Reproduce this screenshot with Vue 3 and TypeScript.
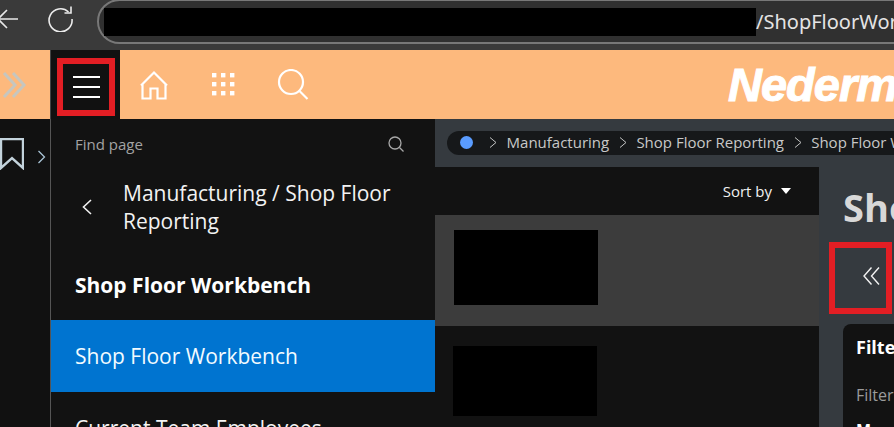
<template>
  <div class="page">
    <div class="browser-bar">
      <svg class="back" width="20" height="24" viewBox="0 0 20 24" fill="none" stroke="#e8e8e8" stroke-width="1.6">
        <path d="M18 12H-2M7 3l-9 9 9 9" />
      </svg>
      <svg class="reload" width="26" height="26" viewBox="0 0 26 26" fill="none" stroke="#ececec" stroke-width="1.6">
        <path d="M20.5 6A11.5 11.5 0 1 0 24 13" />
        <path d="M23 .5V7h-6.5" />
      </svg>
      <div class="address">
        <span class="redacted"></span>
        <span class="url">/ShopFloorWorkbench</span>
      </div>
    </div>

    <header class="topbar">
      <button class="expand">
        <svg width="26" height="28" viewBox="0 0 26 28" fill="none" stroke="#c6c6bf" stroke-width="3">
          <path d="M2 2l11 12L2 26M11 2l11 12-11 12" />
        </svg>
      </button>
      <div class="menu-cell">
        <div class="menu-mark">
          <span></span>
          <span></span>
          <span></span>
        </div>
      </div>
      <div class="top-icons">
        <svg width="30" height="30" viewBox="0 0 30 30" fill="none" stroke="#fff" stroke-width="2.2">
          <path d="M2 15.5L15 2.5l13 13M3.5 14v14.5h8V18.5h7v10h8V14" />
        </svg>
        <svg class="grid-icon" width="24" height="24" viewBox="0 0 24 24" fill="#fff">
          <rect v-for="dot in dots" :key="dot.id" :x="dot.x" :y="dot.y" width="4.4" height="4.4" />
        </svg>
        <svg class="search-icon" width="32" height="32" viewBox="0 0 32 32" fill="none" stroke="#fff" stroke-width="2.2">
          <circle cx="14" cy="13" r="12" />
          <path d="M22.5 22l8 8" />
        </svg>
      </div>
      <div class="logo">Nedermans</div>
    </header>

    <div class="workspace">
      <aside class="rail">
        <svg class="bookmark" width="24" height="32" viewBox="0 0 24 32" fill="none" stroke="#c3d3dc" stroke-width="2.4">
          <path d="M1 1h22v29L12 20 1 30z" />
        </svg>
        <svg class="rail-arrow" width="9" height="14" viewBox="0 0 9 14" fill="none" stroke="#a9c4d6" stroke-width="1.3">
          <path d="M1.5 1l6 6-6 6" />
        </svg>
      </aside>

      <nav class="nav">
        <div class="find">
          <span>Find page</span>
          <svg width="16" height="16" viewBox="0 0 16 16" fill="none" stroke="#a8a8a8" stroke-width="1.3">
            <circle cx="7" cy="7" r="6" />
            <path d="M11.5 11.5l4 4" />
          </svg>
        </div>
        <div class="nav-parent">
          <svg width="10" height="16" viewBox="0 0 10 16" fill="none" stroke="#f0f0f0" stroke-width="1.6">
            <path d="M9 1L1.5 8l7.5 7" />
          </svg>
          <span>Manufacturing / Shop Floor Reporting</span>
        </div>
        <div class="nav-title">Shop Floor Workbench</div>
        <div class="nav-item active">Shop Floor Workbench</div>
        <div class="nav-item">Current Team Employees</div>
      </nav>

      <main class="content">
        <div class="crumbs">
          <span class="crumb-dot"></span>
          <template v-for="crumb in crumbs" :key="crumb">
            <svg width="8" height="11" viewBox="0 0 8 11" fill="none" stroke="#c4c4c4" stroke-width="1">
              <path d="M1 .5l6 5-6 5" />
            </svg>
            <span>{{ crumb }}</span>
          </template>
        </div>

        <div class="panels">
          <section class="list">
            <div class="sort">
              <span>Sort by</span>
              <i class="caret"></i>
            </div>
            <div class="row selected"><span class="thumb"></span></div>
            <div class="row plain"><span class="thumb"></span></div>
          </section>

          <section class="detail">
            <h1>Shop Floor Workbench</h1>
            <div class="collapse-mark">
              <svg width="17" height="18" viewBox="0 0 17 18" fill="none" stroke="#f2f2f2" stroke-width="1.4">
                <path d="M8.5 .5L1 9l7.5 8.5M16 .5L8.5 9l7.5 8.5" />
              </svg>
            </div>
            <div class="filters">
              <h2>Filters</h2>
              <div class="filter-label">Filter by</div>
              <div class="filter-value">Manufacturing</div>
            </div>
          </section>
        </div>
      </main>
    </div>
  </div>
</template>

<script setup lang="ts">
const dots = [0, 1, 2].flatMap((row) =>
  [0, 1, 2].map((col) => ({ id: `${row}-${col}`, x: col * 9, y: row * 9 })),
);

const crumbs: string[] = ['Manufacturing', 'Shop Floor Reporting', 'Shop Floor Workbench'];
</script>

<style>
html,
body {
  margin: 0;
  overflow: hidden;
  background: #111;
}
</style>

<style scoped>
.page {
  width: 894px;
  height: 427px;
  display: flex;
  flex-direction: column;
  overflow: hidden;
  font-family: "Open Sans", "Noto Sans", sans-serif;
  color: #fff;
}

.browser-bar {
  flex: 0 0 50px;
  display: flex;
  align-items: flex-start;
  background: #3a3a3a;
  overflow: hidden;
}

.back {
  flex: none;
  margin-top: 7px;
}

.reload {
  flex: none;
  margin: 6px 0 0 28px;
}

.address {
  flex: none;
  box-sizing: border-box;
  width: 900px;
  height: 45px;
  margin: -1px 0 0 23px;
  padding-left: 5px;
  display: flex;
  align-items: center;
  border: 2px solid #787878;
  border-radius: 23px;
  background: #303030;
}

.redacted {
  flex: none;
  width: 652px;
  height: 28px;
  background: #000;
}

.url {
  font-size: 20px;
  color: #e4e4e4;
  white-space: nowrap;
  font-family: "Noto Sans", sans-serif;
}

.topbar {
  flex: 0 0 69px;
  display: flex;
  align-items: center;
  background: #fdb97d;
  overflow: hidden;
}

.expand {
  flex: 0 0 50px;
  padding: 0 0 0 2px;
  border: 0;
  background: none;
  display: flex;
  line-height: 0;
}

.menu-cell {
  flex: 0 0 70px;
  box-sizing: border-box;
  height: 69px;
  padding: 8px 0 0 6px;
  background: #111;
  border-left: 1px solid #444;
}

.menu-mark {
  box-sizing: border-box;
  width: 58px;
  height: 58px;
  display: flex;
  flex-direction: column;
  align-items: center;
  justify-content: center;
  gap: 8.3px;
  border: 6px solid #e31e24;
}

.menu-mark span {
  width: 27px;
  height: 2px;
  background: #fff;
}

.top-icons {
  display: flex;
  align-items: center;
  margin-left: 19px;
}

.grid-icon {
  margin-left: 43px;
}

.search-icon {
  margin-left: 41px;
}

.logo {
  margin-left: 419px;
  font-family: "Liberation Sans", Arial, sans-serif;
  font-size: 47px;
  font-weight: 700;
  font-style: italic;
  letter-spacing: -1px;
  color: #fff;
  -webkit-text-stroke: 1px #fff;
  white-space: nowrap;
}

.workspace {
  flex: 1;
  display: flex;
  min-height: 0;
}

.rail {
  flex: 0 0 50px;
  display: flex;
  align-items: flex-start;
  background: #111;
  border-right: 1px solid #555;
  padding-top: 19px;
  overflow: hidden;
}

.bookmark {
  flex: none;
}

.rail-arrow {
  flex: none;
  margin: 12px 0 0 13px;
}

.nav {
  flex: 0 0 384px;
  background: #121212;
  overflow: hidden;
}

.find {
  box-sizing: border-box;
  display: flex;
  align-items: center;
  justify-content: space-between;
  height: 60px;
  padding: 0 31px 11px 24px;
  font-size: 15px;
  color: #a3a3a3;
}

.nav-parent {
  display: flex;
  align-items: center;
  gap: 31px;
  padding: 0 40px 0 31px;
  font-size: 21px;
  line-height: 28px;
  color: #f2f2f2;
}

.nav-parent svg {
  flex: none;
}

.nav-title {
  box-sizing: border-box;
  height: 85px;
  padding: 33px 24px 0;
  font-size: 21px;
  line-height: 34px;
  font-weight: 700;
}

.nav-item {
  height: 72px;
  padding: 0 24px;
  display: flex;
  align-items: center;
  font-size: 21px;
  color: #f4f4f4;
  white-space: nowrap;
}

.nav-item.active {
  background: #0074d0;
  color: #f3fbff;
}

.content {
  flex: 1;
  min-width: 0;
  background: #353a3f;
  overflow: hidden;
}

.crumbs {
  box-sizing: border-box;
  width: 900px;
  height: 24px;
  margin: 12px 0 12px 12px;
  padding: 0 0 2px 13px;
  display: flex;
  align-items: center;
  gap: 9.6px;
  border-radius: 12px;
  background: #16181a;
  font-size: 15px;
  color: #c8c8c8;
  white-space: nowrap;
}

.crumbs svg {
  flex: none;
}

.crumb-dot {
  flex: none;
  width: 13px;
  height: 13px;
  margin-right: 6.4px;
  border-radius: 50%;
  background: #5a9cff;
}

.panels {
  display: flex;
}

.list {
  flex: 0 0 384px;
  background: #121212;
}

.sort {
  box-sizing: border-box;
  height: 48px;
  padding: 0 28px 1px 0;
  display: flex;
  align-items: center;
  justify-content: flex-end;
  gap: 9px;
  font-size: 15px;
  color: #f0f0f0;
}

.caret {
  width: 0;
  height: 0;
  border-left: 5.5px solid transparent;
  border-right: 5.5px solid transparent;
  border-top: 6px solid #fff;
}

.row {
  box-sizing: border-box;
  height: 111px;
}

.row.selected {
  padding: 15px 0 0 19px;
  background: #3c3c3c;
}

.row.plain {
  padding: 20px 0 0 18px;
}

.thumb {
  display: block;
  width: 144px;
  height: 75px;
  background: #000;
}

.row.plain .thumb {
  height: 70px;
}

.detail {
  flex: 1;
  min-width: 0;
  padding-left: 24px;
  overflow: hidden;
}

.detail h1 {
  margin: 8px 0 0;
  height: 60px;
  font-size: 38px;
  line-height: 65px;
  font-weight: 700;
  color: #d8d8d8;
  white-space: nowrap;
}

.collapse-mark {
  box-sizing: border-box;
  width: 63px;
  height: 72px;
  margin: 7px 0 0 -14px;
  padding: 19px 0 0 28px;
  border: 6px solid #e31e24;
  line-height: 0;
}

.filters {
  box-sizing: border-box;
  width: 200px;
  height: 160px;
  margin-top: 10px;
  padding: 10px 13px;
  border-radius: 8px 0 0 0;
  background: #121212;
  white-space: nowrap;
}

.filters h2 {
  margin: 0;
  font-size: 18px;
  line-height: 26px;
  font-weight: 700;
}

.filter-label {
  margin-top: 24px;
  font-size: 16px;
  line-height: 22px;
  color: #9b9b9b;
}

.filter-value {
  margin-top: 13px;
  font-size: 16px;
  font-weight: 700;
}
</style>
